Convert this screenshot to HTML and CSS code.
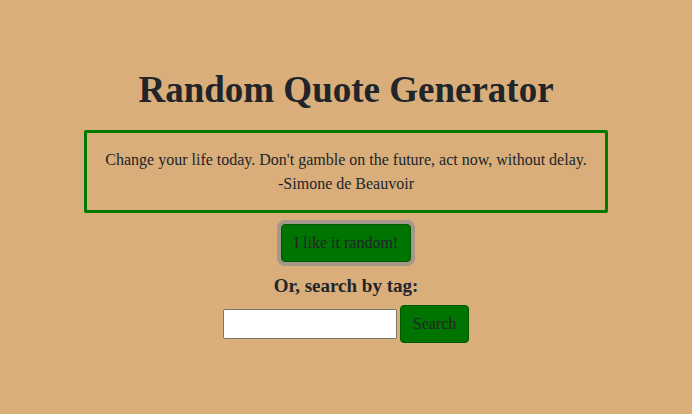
FILE: index.html
```html
<!DOCTYPE html>
<html>
<head>
<meta charset="utf-8">
<link rel="stylesheet" href="styles.css">
</head>
<body>
<main class="page">
  <h1 class="title">Random Quote Generator</h1>
  <section class="quote-box">
    <p class="quote">Change your life today. Don't gamble on the future, act now, without delay.</p>
    <p class="author">-Simone de Beauvoir</p>
  </section>
  <button class="btn btn-random">I like it random!</button>
  <h2 class="subtitle">Or, search by tag:</h2>
  <form class="search">
    <input class="search-input" type="text">
    <button class="btn btn-search" type="button">Search</button>
  </form>
</main>
</body>
</html>
```
FILE: styles.css
```css
html, body {
  margin: 0;
  padding: 0;
  background: #d9ae7b;
}
body {
  font-family: "Liberation Serif", "Times New Roman", serif;
  color: #212529;
}
.page {
  display: flex;
  flex-direction: column;
  align-items: center;
  padding-top: 68px;
}
.title {
  margin: 0;
  font-size: 37px;
  line-height: 44px;
  font-weight: bold;
}
.quote-box {
  box-sizing: border-box;
  width: 524px;
  height: 83px;
  margin-top: 18px;
  border: 3px solid #007a00;
  border-radius: 2px;
  display: flex;
  flex-direction: column;
  align-items: center;
  justify-content: center;
  gap: 6px;
}
.quote-box p {
  margin: 0;
  font-size: 16px;
  line-height: 18px;
}
.btn {
  font-family: inherit;
  color: #212529;
  background: #007400;
  border: 1px solid #005a00;
  border-radius: 4px;
  cursor: pointer;
}
.btn-random {
  margin-top: 11px;
  width: 130px;
  height: 38px;
  font-size: 16px;
  box-shadow: 0 0 0 4px #a6978b;
}
.subtitle {
  margin: 12px 0 0;
  font-size: 19px;
  line-height: 24px;
  font-weight: bold;
}
.search {
  margin-top: 7px;
  display: flex;
  align-items: center;
  gap: 3px;
}
.search-input {
  box-sizing: border-box;
  width: 174px;
  height: 30px;
  border: 1px solid #767676;
  border-radius: 2px;
  background: #fff;
  margin: 0;
}
.btn-search {
  width: 69px;
  height: 38px;
  font-size: 16px;
}
```
